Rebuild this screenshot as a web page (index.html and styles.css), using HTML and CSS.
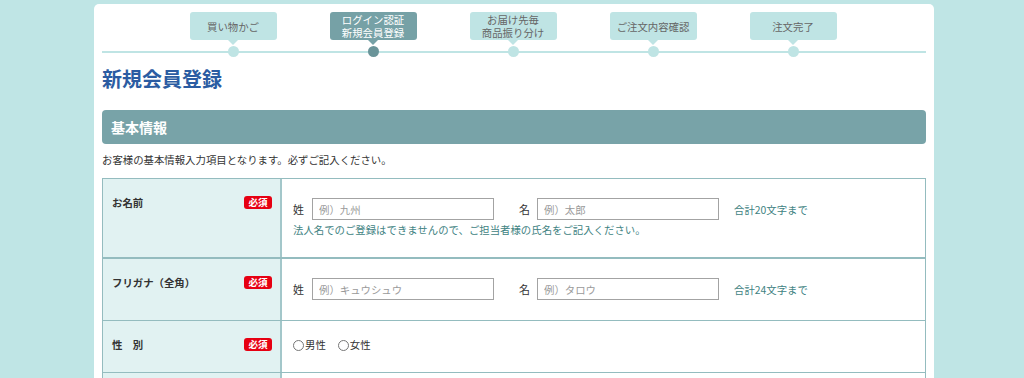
FILE: index.html
```html
<!DOCTYPE html>
<html lang="ja">

<head>
    <meta charset="utf-8">
    <meta name="viewport" content="width=device-width, initial-scale=1.0">
    <title>新規会員登録</title>
    <link rel="stylesheet" href="styles.css">
</head>

<body>

    <div class="page">

        <ol class="steps">
            <li class="step"><span class="tab">買い物かご</span><span class="dot"></span></li>
            <li class="step aktiv"><span class="tab">ログイン認証<br>新規会員登録</span><span class="dot"></span></li>
            <li class="step"><span class="tab">お届け先毎<br>商品振り分け</span><span class="dot"></span></li>
            <li class="step"><span class="tab">ご注文内容確認</span><span class="dot"></span></li>
            <li class="step"><span class="tab">注文完了</span><span class="dot"></span></li>
        </ol>

        <h1 class="title">新規会員登録</h1>

        <h2 class="section">基本情報</h2>
        <p class="lead">お客様の基本情報入力項目となります。必ずご記入ください。</p>

        <div class="form">
            <div class="row row-name">
                <div class="label">お名前<span class="req">必須</span></div>
                <div class="field">
                    <div class="inputs">
                        <span class="pre">姓</span>
                        <input type="text" placeholder="例）九州">
                        <span class="pre second">名</span>
                        <input type="text" placeholder="例）太郎">
                        <span class="hint">合計20文字まで</span>
                    </div>
                    <p class="note">法人名でのご登録はできませんので、ご担当者様の氏名をご記入ください。</p>
                </div>
            </div>
            <div class="row row-kana">
                <div class="label">フリガナ（全角）<span class="req">必須</span></div>
                <div class="field">
                    <div class="inputs">
                        <span class="pre">姓</span>
                        <input type="text" placeholder="例）キュウシュウ">
                        <span class="pre second">名</span>
                        <input type="text" placeholder="例）タロウ">
                        <span class="hint">合計24文字まで</span>
                    </div>
                </div>
            </div>
            <div class="row row-sex">
                <div class="label">性　別<span class="req">必須</span></div>
                <div class="field radios">
                    <label><input type="radio" name="sex">男性</label>
                    <label><input type="radio" name="sex">女性</label>
                </div>
            </div>
            <div class="row row-next">
                <div class="label"></div>
                <div class="field"></div>
            </div>
        </div>

    </div>

</body>

</html>
```

FILE: styles.css
```css
body {
    margin: 0;
    padding: 0 0 0 4px;
    background-color: #bfe5e5;
    font-family: "Noto Sans CJK JP", "Noto Sans", sans-serif;
    color: #333;
}

.page {
    width: 824px;
    min-height: 420px;
    margin: 4px auto 0;
    padding: 8px;
    background-color: #fff;
    border-radius: 5px 5px 0 0;
}

/* steps */

.steps {
    display: flex;
    list-style: none;
    margin: 0;
    padding: 0 0 0 61px;
    background: linear-gradient(#bfe4e4, #bfe4e4) no-repeat 0 39px / 100% 2px;
}

.step {
    width: 140px;
    display: flex;
    flex-direction: column;
    align-items: center;
}

.tab {
    position: relative;
    width: 87px;
    height: 28px;
    display: flex;
    align-items: center;
    justify-content: center;
    text-align: center;
    background-color: #bfe4e4;
    color: #666;
    border-radius: 3px;
    font-size: 10.4px;
    line-height: 13px;
}

.tab::after {
    content: "";
    position: absolute;
    left: 38px;
    top: 28px;
    border-top: 5px solid #bfe4e4;
    border-left: 5px solid transparent;
    border-right: 5px solid transparent;
}

.dot {
    width: 11px;
    height: 11px;
    margin-top: 6px;
    border-radius: 50%;
    background-color: #bfe4e4;
}

.aktiv .tab {
    background-color: #76a1a6;
    color: #fff;
}

.aktiv .tab::after {
    border-top-color: #76a1a6;
}

.aktiv .dot {
    background-color: #6a9499;
}

/* headings */

.title {
    margin: 9px 0 0;
    font-size: 20px;
    line-height: 26px;
    color: #2b5ca2;
    font-weight: bold;
}

.section {
    margin: 18px 0 0;
    height: 34px;
    padding-left: 9px;
    line-height: 34px;
    font-size: 14px;
    font-weight: bold;
    color: #fff;
    background-color: #78a3a8;
    border-radius: 4px;
}

.lead {
    margin: 8px 0 0;
    font-size: 10.4px;
    line-height: 16px;
}

/* form */

.form {
    margin-top: 10px;
    border: 1px solid #94bcbf;
    border-bottom: none;
}

.row {
    display: grid;
    grid-template-columns: 179px 1fr;
    box-sizing: border-box;
    border-bottom: 1px solid #94bcbf;
}

.row-name {
    height: 80px;
    border-bottom-width: 2px;
}

.row-kana {
    height: 62px;
}

.row-sex {
    height: 52px;
}

.row-next {
    height: 60px;
}

.label {
    display: flex;
    justify-content: space-between;
    align-items: flex-start;
    padding: 16px 8px 0 9px;
    background-color: #e1f2f2;
    border-right: 2px solid #a3c7ca;
    font-size: 10.4px;
    line-height: 16px;
    font-weight: bold;
}

.req {
    margin-top: 1px;
    width: 28px;
    height: 13px;
    line-height: 13px;
    text-align: center;
    font-size: 9.6px;
    color: #fff;
    background-color: #e60012;
    border-radius: 3px;
}

.field {
    padding: 19px 10px 0 11px;
    font-size: 10.4px;
}

.inputs {
    display: flex;
    align-items: center;
}

.pre {
    width: 11px;
    margin-right: 8px;
    font-size: 11px;
}

.pre.second {
    margin-left: 25px;
    margin-right: 7px;
}

.inputs input {
    box-sizing: border-box;
    width: 182px;
    height: 22px;
    margin: 0;
    padding: 0 6px;
    border: 1px solid #a3a3a3;
    font-family: inherit;
    font-size: 10.4px;
}

.inputs input::placeholder {
    color: #9a9a9a;
}

.hint {
    margin-left: 15px;
    color: #3f8383;
}

.note {
    margin: 2px 0 0;
    line-height: 16px;
    color: #3f8383;
}

.radios {
    display: flex;
    align-items: flex-start;
    gap: 12px;
    padding-top: 16px;
    line-height: 16px;
}

.radios label {
    display: flex;
    align-items: center;
}

.radios input {
    width: 11px;
    height: 11px;
    margin: 0 1px 0 0;
}
```
